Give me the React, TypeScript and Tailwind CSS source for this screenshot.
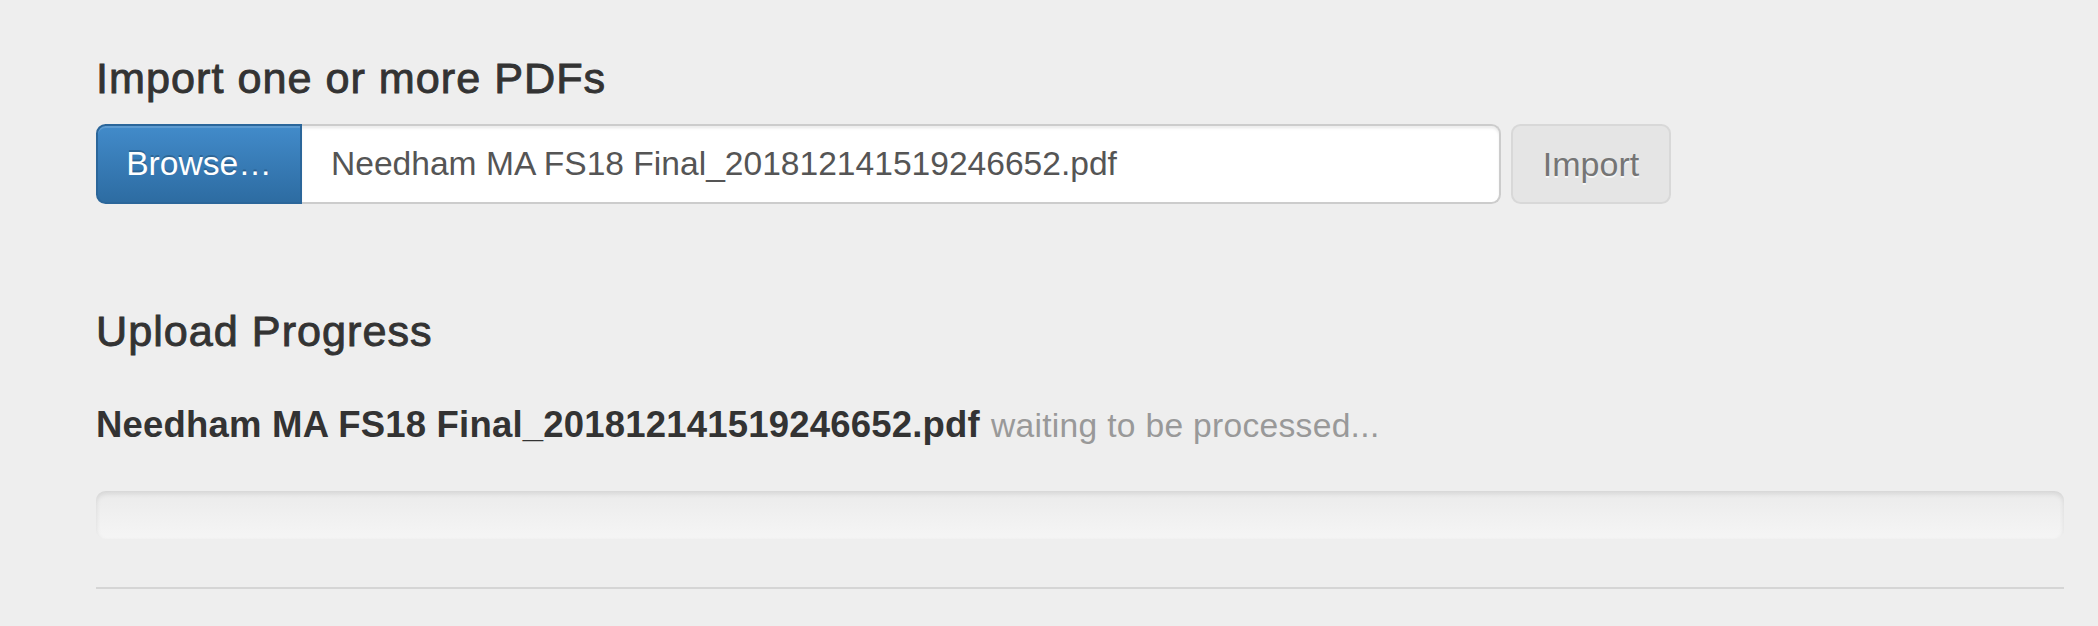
import React from "react";

export default function App() {
  return (
    <div className="min-h-[626px] w-full bg-[#eeeeee] pl-[96px] pr-[34px] pt-[54px] font-['Liberation_Sans',Arial,sans-serif] text-[#333333]">
      <h2 className="text-[43.2px] leading-[48px] font-medium tracking-[1px] [-webkit-text-stroke:0.9px_#333333]">
        Import one or more PDFs
      </h2>

      <div className="mt-[22px] flex h-[80px] items-stretch">
        <div className="flex w-[206px] items-center justify-center rounded-l-[9.6px] border-2 border-[#2b669a] bg-linear-to-b from-[#428bca] to-[#2d6ca2] text-[33.6px] text-white shadow-[inset_0_2px_0_rgba(255,255,255,0.15)] [text-shadow:0_-2px_0_rgba(0,0,0,0.2)]">
          Browse…
        </div>
        <div className="flex w-[1199px] items-center rounded-r-[9.6px] border-2 border-l-0 border-[#cccccc] bg-white pl-[29px] text-[33.6px] text-[#555555] shadow-[inset_0_2.4px_2.4px_rgba(0,0,0,0.075)]">
          Needham MA FS18 Final_201812141519246652.pdf
        </div>
        <div className="ml-[10px] flex w-[160px] items-center justify-center rounded-[9.6px] border-2 border-[#d8d8d8] bg-[#e5e5e5] text-[34px] text-[#757575] [text-shadow:0_2px_0_rgba(255,255,255,0.7)]">
          Import
        </div>
      </div>

      <h2 className="mt-[103px] text-[43.2px] leading-[48px] font-medium tracking-[1px] [-webkit-text-stroke:0.9px_#333333]">
        Upload Progress
      </h2>

      <div className="mt-[50px] flex items-baseline gap-[11px] whitespace-nowrap">
        <strong className="text-[36.5px] leading-[40px] font-bold tracking-[0.2px] text-[#333333]">
          Needham MA FS18 Final_201812141519246652.pdf
        </strong>
        <span className="text-[33.6px] leading-[40px] tracking-[0.3px] text-[#999999]">waiting to be processed...</span>
      </div>

      <div className="mt-[45px] h-[48px] w-full rounded-[9.6px] bg-linear-to-b from-[#ebebeb] to-[#f5f5f5] shadow-[inset_0_2.4px_4.8px_rgba(0,0,0,0.1)]" />

      <hr className="mt-[48px] border-0 border-t-2 border-[#d5d5d5]" />
    </div>
  );
}
